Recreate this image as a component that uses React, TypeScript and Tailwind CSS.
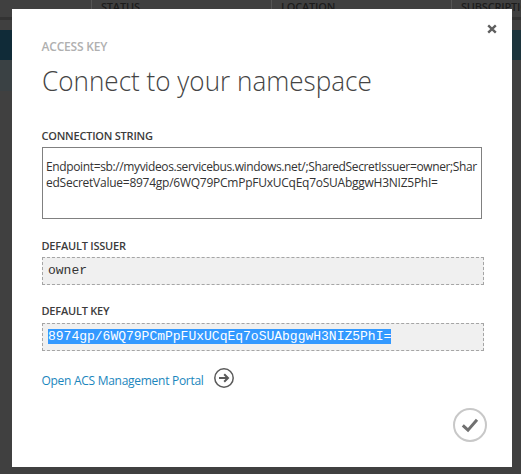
import type { ReactNode } from "react";

function Label({ children }: { children: ReactNode }) {
  return (
    <div className="-ml-[0.5px] h-4 text-[11px] leading-4 font-semibold tracking-[-0.22px] whitespace-nowrap text-[#3c3c3c]">{children}</div>
  );
}

function BackdropTable() {
  return (
    <div className="h-full bg-[#404040]">
      <div className="flex h-[17px] text-[11px] leading-[13px] font-semibold tracking-[-0.2px] whitespace-nowrap text-[#1c1c1c]">
        <div className="w-[92px] shrink-0 border-r border-[#555]" />
        <div className="w-[180px] shrink-0 border-r border-[#555] pl-[9px]">STATUS</div>
        <div className="w-[180px] shrink-0 border-r border-[#555] pl-[9px]">LOCATION</div>
        <div className="pl-[9px]">SUBSCRIPTION</div>
      </div>
      <div className="h-[3px] bg-[#333]" />
      <div className="h-[10px]" />
      <div className="flex h-[30px] justify-between bg-[#102b38]">
        <div className="w-3" />
        <div className="w-[9px] bg-[#1c343c]" />
      </div>
      <div className="flex h-[31px]">
        <div className="w-3 bg-[#3a4144]" />
      </div>
    </div>
  );
}

export default function App() {
  return (
    <div className="relative h-[474px] w-[521px] overflow-hidden font-['Open_Sans','Noto_Sans',sans-serif]">
      <BackdropTable />
      <div className="absolute top-[9px] left-3 flex h-[458px] w-[500px] flex-col bg-white pl-[30px]">
        <button aria-label="Close" className="absolute top-[15px] right-[15px] h-[10px] w-[10px]">
          <svg viewBox="0 0 10 10" className="block h-[10px] w-[10px]" fill="none" stroke="#5f5f5f" strokeWidth="2.4">
            <path d="M1.2 1.4 8.8 8.6M8.8 1.4 1.2 8.6" />
          </svg>
        </button>
        <div className="-ml-[0.5px] mt-[30px] h-4 text-[12px] leading-4 font-semibold tracking-[-0.2px] text-[#b0b0b0]">
          ACCESS KEY
        </div>
        <h1 className="-ml-[0.5px] mt-[5px] h-10 w-[360px] origin-left scale-x-[0.932] text-[28px] leading-10 font-light whitespace-nowrap text-[#444]">
          Connect to your namespace
        </h1>
        <div className="mt-[28px]">
          <Label>CONNECTION STRING</Label>
        </div>
        <div className="mt-[3px] h-[72px] w-[440px] border border-[#808080] pt-[11px] pl-[3px] text-[12px] leading-4 whitespace-nowrap text-[#333]">
          <div className="tracking-[-0.37px]">Endpoint=sb://myvideos.servicebus.windows.net/;SharedSecretIssuer=owner;Shar</div>
          <div className="tracking-[-0.25px]">edSecretValue=8974gp/6WQ79PCmPpFUxUCqEq7oSUAbggwH3NIZ5PhI=</div>
        </div>
        <div className="mt-[19px]">
          <Label>DEFAULT ISSUER</Label>
        </div>
        <div className="mt-[3px] h-[28px] w-[442px] border border-dashed border-[#a5a5a5] bg-[#f0f0f0] pt-[5px] pl-[5px] font-['Liberation_Mono',monospace] text-[13px] leading-[15px] text-[#333]">
          owner
        </div>
        <div className="mt-[18px]">
          <Label>DEFAULT KEY</Label>
        </div>
        <div className="mt-[4px] flex h-[28px] w-[442px] items-start border border-dashed border-[#a5a5a5] bg-[#f0f0f0] pt-[5px] pl-[5px] font-['Liberation_Mono',monospace] text-[13px] leading-[15px]">
          <span className="h-[15px] bg-[#3399ff] text-white">8974gp/6WQ79PCmPpFUxUCqEq7oSUAbggwH3NIZ5PhI=</span>
        </div>
        <a className="mt-[17px] flex h-5 whitespace-nowrap text-[#1b86bd]">
          <span className="-ml-[0.5px] w-[172.5px] pt-[3px] text-[12px] leading-5 tracking-[-0.28px]">Open ACS Management Portal</span>
          <svg viewBox="0 0 20 20" className="h-5 w-5" fill="none" stroke="#5a5a5a">
            <circle cx="10" cy="10" r="9.2" strokeWidth="1.5" />
            <path d="M5 10h9M10.2 6.2 14 10l-3.8 3.8" strokeWidth="2" />
          </svg>
        </a>
        <button aria-label="Confirm" className="mt-[20px] ml-[411px] h-[34px] w-[34px]">
          <svg viewBox="0 0 34 34" className="block h-[34px] w-[34px]" fill="none">
            <circle cx="17" cy="17" r="16" stroke="#c8c8c8" strokeWidth="2" />
            <path d="M9.8 17.3 15 22.2 24 11.8" stroke="#707070" strokeWidth="3" />
          </svg>
        </button>
      </div>
    </div>
  );
}
